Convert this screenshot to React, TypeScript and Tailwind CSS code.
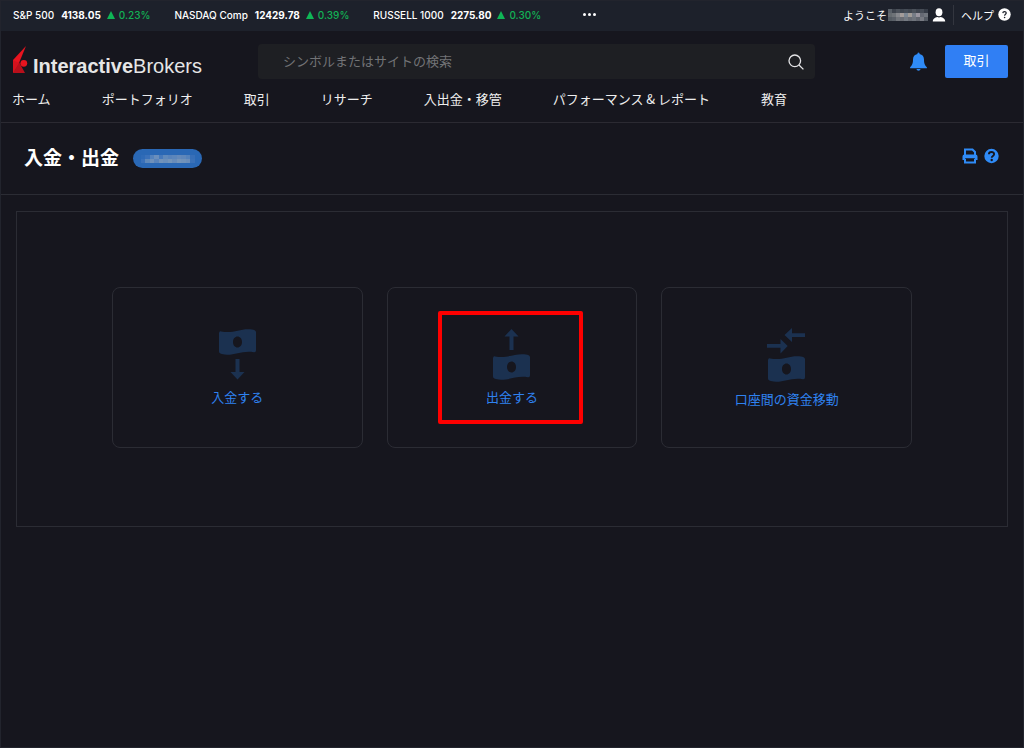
import React from "react";

const quotes = [
  { name: "S&P 500", value: "4138.05", change: "0.23%" },
  { name: "NASDAQ Comp", value: "12429.78", change: "0.39%" },
  { name: "RUSSELL 1000", value: "2275.80", change: "0.30%" },
];

const navItems = [
  "ホーム",
  "ポートフォリオ",
  "取引",
  "リサーチ",
  "入出金・移管",
  "パフォーマンス & レポート",
  "教育",
];

const nameMosaic = [
  "bg-[#596068]", "bg-[#3d434d]", "bg-[#4a5059]", "bg-[#3f4650]", "bg-[#454c56]",
  "bg-[#40464f]", "bg-[#4b515a]", "bg-[#3f454f]", "bg-[#464c56]", "bg-[#353b46]",
  "bg-[#656b70]", "bg-[#6e7378]", "bg-[#86888d]", "bg-[#a39c9a]", "bg-[#7c8793]",
  "bg-[#a09b97]", "bg-[#767c86]", "bg-[#9a96a0]", "bg-[#666a74]", "bg-[#70757d]",
  "bg-[#545b62]", "bg-[#5a6068]", "bg-[#71757b]", "bg-[#6a6d74]", "bg-[#747a82]",
  "bg-[#686c74]", "bg-[#6f747c]", "bg-[#62666f]", "bg-[#777a82]", "bg-[#545a63]",
];

const accountMosaic = [
  "bg-[#2f6bb7]", "bg-[#3a71ba]", "bg-[#5583bd]", "bg-[#6b8fbc]", "bg-[#4679bb]", "bg-[#5f89bb]",
  "bg-[#5883bb]", "bg-[#5c86bb]", "bg-[#6489ba]", "bg-[#5f87ba]", "bg-[#5582bb]", "bg-[#376fb8]",
  "bg-[#3a71ba]", "bg-[#5f89bb]", "bg-[#6f91bb]", "bg-[#5a84bb]", "bg-[#7293ba]", "bg-[#6b8fbb]",
  "bg-[#7495ba]", "bg-[#688cba]", "bg-[#7595ba]", "bg-[#7092ba]", "bg-[#6b8eba]", "bg-[#3a71b8]",
];

function Logo() {
  return (
    <a href="#" className="flex items-end text-[#e6e6e6]" aria-label="InteractiveBrokers">
      <svg width="16" height="28" viewBox="0 0 16 28" aria-hidden="true">
        <path d="M13 0 L0 14 V27 L6 17 Z" fill="#e8141f" />
        <path d="M0 27 L6 16 L12 27 Z" fill="#b80f1b" />
        <path d="M0 14 L6 17 L0 27 Z" fill="#d5121d" />
        <circle cx="10.8" cy="17.3" r="3.4" fill="#e8141f" />
      </svg>
      <span className="ml-1 pt-2 font-['Liberation_Sans',sans-serif] text-[20px] leading-4">
        <b className="font-bold">Interactive</b>Brokers
      </span>
    </a>
  );
}

function Banknote({ x, y }: { x: number; y: number }) {
  return (
    <path
      transform={`translate(${x} ${y})`}
      fillRule="evenodd"
      d="M0 4.2 Q0 2 2.2 2.4 C13 4.6 20 0.2 29 0.2 C32 0.2 34 0.6 35.6 1.2 Q37 1.7 37 3.2 V21.4 Q37 23.4 35 23.2 C24 21.3 17 25.9 8 25.8 C5 25.8 3 25.3 1.4 24.6 Q0 24 0 22.6 Z M18.5 7.5 C16 7.5 14 9.8 14 13 C14 16.2 16 18.5 18.5 18.5 C21 18.5 23 16.2 23 13 C23 9.8 21 7.5 18.5 7.5 Z"
    />
  );
}

function DepositIcon() {
  return (
    <svg width="39" height="52" viewBox="0 0 39 52" fill="#1b3150" aria-hidden="true">
      <Banknote x={1} y={1} />
      <path d="M17.5 31 H21.5 V44 H26.5 L19.5 51.5 L12.5 44 H17.5 Z" />
    </svg>
  );
}

function WithdrawIcon() {
  return (
    <svg width="39" height="52" viewBox="0 0 39 52" fill="#1b3150" aria-hidden="true">
      <path d="M17.5 22 H21.5 V8.5 H26.5 L19.5 1 L12.5 8.5 H17.5 Z" />
      <Banknote x={1} y={26} />
    </svg>
  );
}

function TransferIcon() {
  return (
    <svg width="39" height="54" viewBox="0 0 39 54" fill="#1b3150" aria-hidden="true">
      <path d="M38 5.3 V8.9 H25 V14 L17.5 7.1 L25 0 V5.3 Z" />
      <path d="M0 16.1 V19.7 H13.5 V25.5 L20.7 18 L13.5 11 V16.1 Z" />
      <Banknote x={1} y={28} />
    </svg>
  );
}

function ActionCard({ label, icon, marked }: { label: string; icon: React.ReactNode; marked?: boolean }) {
  return (
    <a
      href="#"
      className="relative flex h-[161px] flex-col items-center rounded-lg border border-[#2b2c34] pt-10 text-[13px] leading-5 text-[#2f82f0]"
    >
      {icon}
      <span className="mt-[7px]">{label}</span>
      {marked && (
        <span className="pointer-events-none absolute top-[23px] left-[50px] h-[113px] w-[145px] rounded-xs border-4 border-[#fe0000]" />
      )}
    </a>
  );
}

export default function App() {
  return (
    <div className="min-h-screen border border-[#22242d] bg-[#16161e] font-['Noto_Sans_CJK_JP',sans-serif] text-[13px] text-[#eeeeee]">
      <div className="flex h-[30px] items-center justify-between bg-[#1d212b] pr-3 pb-[3px] pl-3 text-white">
        <div className="flex items-center font-['Inter','Noto_Sans_CJK_JP',sans-serif] text-[10px] leading-4">
          {quotes.map((q) => (
            <div key={q.name} className="mr-6 flex items-center whitespace-nowrap">
              <span className="font-medium">{q.name}</span>
              <span className="ml-[7px] font-bold">{q.value}</span>
              <svg className="mr-1 ml-1.5" width="8" height="8" viewBox="0 0 8 8" aria-hidden="true">
                <path d="M4 0 L8 8 H0 Z" fill="#0fb656" />
              </svg>
              <span className="font-medium text-[#12b155]">{q.change}</span>
            </div>
          ))}
          <button type="button" aria-label="その他" className="ml-[18px] flex gap-0.5">
            <span className="size-[3px] rounded-full bg-white" />
            <span className="size-[3px] rounded-full bg-white" />
            <span className="size-[3px] rounded-full bg-white" />
          </button>
        </div>
        <div className="flex items-center text-[11px] leading-4">
          <span>ようこそ</span>
          <span role="img" aria-label="ユーザー名" className="ml-px grid h-3 w-10 grid-cols-10 grid-rows-3">
            {nameMosaic.map((cell, i) => (
              <span key={i} className={cell} />
            ))}
          </span>
          <svg className="ml-1" width="14" height="14" viewBox="0 0 14 14" fill="#fff" aria-hidden="true">
            <ellipse cx="7" cy="4.2" rx="3.4" ry="4" />
            <path d="M0.8 13.5 C0.8 10.6 3 9.6 5.3 9 L7 9.6 L8.7 9 C11 9.6 13.2 10.6 13.2 13.5 Z" />
          </svg>
          <span className="mx-[7px] h-5 w-px bg-[#33363f]" />
          <a href="#" className="flex items-center">
            ヘルプ
            <svg className="ml-1" width="13" height="13" viewBox="0 0 13 13" aria-hidden="true">
              <circle cx="6.5" cy="6.5" r="6.2" fill="#fff" />
              <path d="M4.8 5.1 C4.9 3 8.3 3.1 8.2 5.1 C8.1 6.2 6.6 6.3 6.6 7.7" fill="none" stroke="#1d212b" strokeWidth="1.2" />
              <circle cx="6.6" cy="9.5" r="0.8" fill="#1d212b" />
            </svg>
          </a>
        </div>
      </div>

      <header className="border-b border-[#2b2a32]">
        <div className="flex items-start pt-[13px] pr-[15px] pl-3">
          <div className="w-[245px] shrink-0 pt-0.5">
            <Logo />
          </div>
          <div className="flex h-[35px] flex-1 items-center rounded-sm bg-[#1e1f23] pr-[11px] pl-[25px]">
            <input
              type="text"
              aria-label="検索"
              placeholder="シンボルまたはサイトの検索"
              className="min-w-0 flex-1 bg-transparent pb-0.5 leading-5 outline-none placeholder:text-[#727376]"
            />
            <button type="button" aria-label="検索する">
              <svg width="16" height="16" viewBox="0 0 16 16" fill="none" stroke="#e4e4e6" strokeWidth="1.3" aria-hidden="true">
                <circle cx="6.8" cy="6.8" r="5.8" />
                <path d="M11 11 L15.4 15.4" />
              </svg>
            </button>
          </div>
          <button type="button" aria-label="通知" className="mt-2 ml-[95px]">
            <svg width="17" height="19" viewBox="0 0 17 19" fill="#2f8bf7" aria-hidden="true">
              <path d="M7.5 2 V1 Q8.5 -0.2 9.5 1 V2 C12.4 2.4 14 4.7 14 7.5 C14 11.5 14.7 13 16.9 15.2 V16.2 H0.1 V15.2 C2.3 13 3 11.5 3 7.5 C3 4.7 4.6 2.4 7.5 2 Z" />
              <path d="M6.4 17 H10.6 Q10.2 18.8 8.5 18.8 Q6.8 18.8 6.4 17 Z" />
            </svg>
          </button>
          <button type="button" className="mt-px ml-[18px] h-[33px] w-[63px] rounded-xs bg-[#307ff4] pb-[3px] text-white">
            取引
          </button>
        </div>
        <nav className="flex gap-[51px] px-[11px] pt-2.5 pb-[13px] leading-5 whitespace-nowrap">
          {navItems.map((item) => (
            <a key={item} href="#">
              {item}
            </a>
          ))}
        </nav>
      </header>

      <div className="flex h-[72px] items-center justify-between border-b border-[#2b2c34] pr-6 pl-[23px]">
        <div className="flex items-center pb-1">
          <h1 className="text-[19px] leading-7 font-bold text-white">入金・出金</h1>
          <span className="mt-1 ml-3.5 flex h-[19px] w-[69px] items-center justify-center rounded-full bg-[#2a68b5]">
            <span role="img" aria-label="口座番号" className="grid h-2 w-[54px] grid-cols-12 grid-rows-2">
              {accountMosaic.map((cell, i) => (
                <span key={i} className={cell} />
              ))}
            </span>
          </span>
        </div>
        <div className="flex gap-1.5 pb-1.5">
          <button type="button" aria-label="印刷">
            <svg width="16" height="16" viewBox="0 0 16 16" aria-hidden="true">
              <path d="M3 7 V1.5 H10.5 L13 4 V7 M3 11 V14.5 H13 V11" fill="none" stroke="#2f8bf7" strokeWidth="2" />
              <path d="M0.5 12 V8.5 Q0.5 6.5 2.5 6.5 H13.5 Q15.5 6.5 15.5 8.5 V12 H12.8 V10.2 H3.2 V12 Z" fill="#2f8bf7" />
            </svg>
          </button>
          <button type="button" aria-label="ヘルプを表示">
            <svg width="15" height="16" viewBox="0 0 15 16" aria-hidden="true">
              <circle cx="7.5" cy="8" r="7.2" fill="#2f8bf7" />
              <path d="M4.9 6.3 C5 3.2 10.2 3.3 10.1 6.3 C10 8 7.7 7.9 7.7 9.7" fill="none" stroke="#16161e" strokeWidth="1.9" />
              <circle cx="7.7" cy="12" r="1.2" fill="#16161e" />
            </svg>
          </button>
        </div>
      </div>

      <main className="px-[15px] py-4">
        <section className="border border-[#2b2c34] px-[95px] pt-[75px] pb-[78px]">
          <div className="grid grid-cols-3 gap-6">
            <ActionCard label="入金する" icon={<DepositIcon />} />
            <ActionCard label="出金する" icon={<WithdrawIcon />} marked />
            <ActionCard label="口座間の資金移動" icon={<TransferIcon />} />
          </div>
        </section>
      </main>
    </div>
  );
}
